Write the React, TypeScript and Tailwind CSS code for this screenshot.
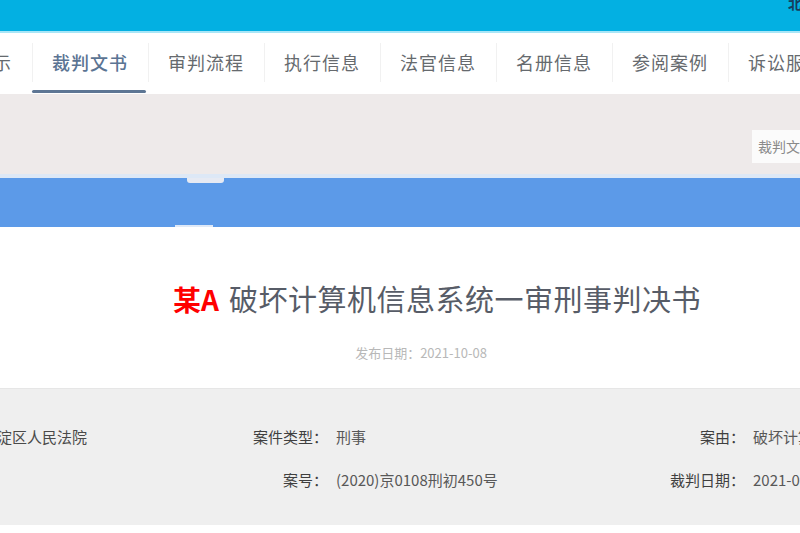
const tabs = ['公告展示', '裁判文书', '审判流程', '执行信息', '法官信息', '名册信息', '参阅案例', '诉讼服务'];

function InfoCell({ label, value, labelWidth, className = '' }: { label: string; value: string; labelWidth: string; className?: string }) {
  return (
    <div className={`flex items-center shrink-0 ${className}`}>
      <span className={`${labelWidth} shrink-0 text-right text-[#3f3f3f] whitespace-nowrap`}>{label}</span>
      <span className="ml-[8px] text-[#585858] whitespace-nowrap">{value}</span>
    </div>
  );
}

export default function App() {
  return (
    <div
      className="w-[800px] h-[533px] overflow-hidden bg-white flex flex-col"
      style={{ fontFamily: '"Noto Sans CJK SC", "Noto Sans", sans-serif' }}
    >
      {/* top bar */}
      <div className="h-[31px] shrink-0 bg-[#03b0e2] flex justify-end overflow-hidden">
        <span className="mr-[-16px] mt-[-4px] text-[14px] font-bold text-[#173d5c] leading-none">北京</span>
      </div>
      <div className="h-[2px] shrink-0 bg-[#a9e6f7]" />

      {/* nav */}
      <div className="h-[61px] shrink-0 bg-white flex ml-[-84px]">
        {tabs.map((t, i) => {
          const active = i === 1;
          return (
            <div key={t} className="relative w-[116px] shrink-0 flex items-center justify-center">
              {i > 0 && <div className="absolute left-0 top-[10px] bottom-[12px] w-px bg-[#f1f1f1]" />}
              <span
                className={`text-[18px] tracking-[1px] pb-[2px] ${active ? 'text-[#5b7493] font-medium' : 'text-[#666a6e]'}`}
              >
                {t}
              </span>
              {active && <div className="absolute left-0 right-[2px] bottom-[1px] h-[3px] rounded-full bg-[#5d7694]" />}
            </div>
          );
        })}
      </div>

      {/* gray band */}
      <div className="h-[80px] shrink-0 bg-[#eeeaea] flex justify-end items-start">
        <div className="mt-[36px] w-[48px] h-[33px] bg-[#fbfbfb] flex items-center pl-[6px] overflow-hidden">
          <span className="text-[14px] text-[#8a8a8a] whitespace-nowrap">裁判文书</span>
        </div>
      </div>

      {/* blue band */}
      <div className="h-[4px] shrink-0 bg-[#dde8f6]" />
      <div className="relative h-[49px] shrink-0 bg-[#5c9ae8]">
        <div className="absolute left-[187px] top-0 w-[37px] h-[5px] bg-[#e6eaf3] rounded-b-[3px]" />
        <div className="absolute left-[175px] bottom-0 w-[38px] h-[2px] bg-[#dfe9f7]" />
      </div>

      {/* title area */}
      <div className="h-[161px] shrink-0 bg-white flex flex-col items-center">
        <h1 className="mt-[57px] ml-[74px] flex items-center leading-none">
          <span className="text-[28px] font-bold text-[#ff0000]">某A</span>
          <span className="ml-[10px] text-[29px] tracking-[0.5px] text-[#575c67]">破坏计算机信息系统一审刑事判决书</span>
        </h1>
        <p className="mt-[33px] ml-[42px] text-[13px] text-[#b8b8b8] leading-none">发布日期：2021-10-08</p>
      </div>

      {/* info box */}
      <div className="h-[137px] shrink-0 bg-[#efefef] border-t border-[#e6e6e6] flex flex-col text-[15px]">
        <div className="mt-[37px] flex items-center ml-[-63px]">
          <div className="w-[303px] shrink-0 whitespace-nowrap text-[#4a4a4a]">北京市海淀区人民法院</div>
          <InfoCell label="案件类型：" value="刑事" labelWidth="w-[88px]" className="w-[425px]" />
          <InfoCell label="案由：" value="破坏计算机信息系统罪" labelWidth="w-[80px]" />
        </div>
        <div className="mt-[20px] flex items-center ml-[-63px]">
          <div className="w-[303px] shrink-0" />
          <InfoCell label="案号：" value="(2020)京0108刑初450号" labelWidth="w-[88px]" className="w-[425px]" />
          <InfoCell label="裁判日期：" value="2021-09-15" labelWidth="w-[80px]" />
        </div>
      </div>
      <div className="flex-1 bg-white" />
    </div>
  );
}
